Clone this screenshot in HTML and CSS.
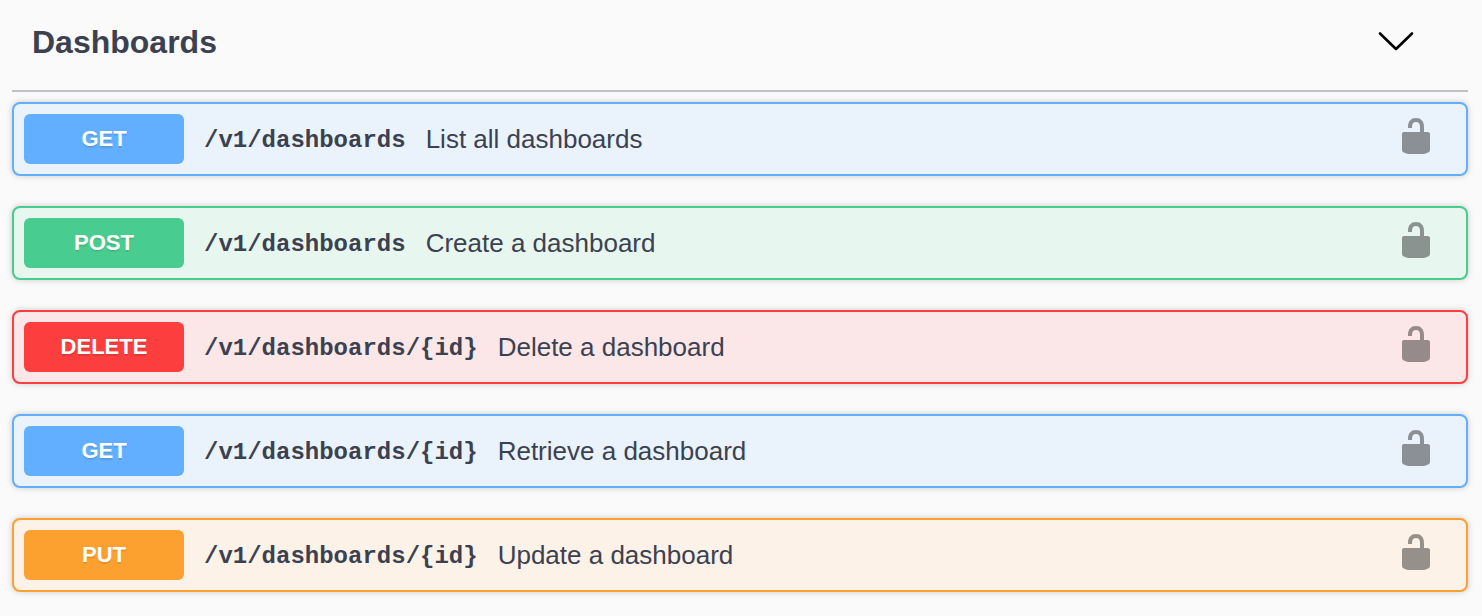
FILE: index.html
```html
<!DOCTYPE html>
<html lang="en">
<head>
<meta charset="utf-8">
<title>Dashboards</title>
<link rel="stylesheet" href="styles.css">
</head>
<body>
<svg width="0" height="0" hidden>
  <symbol id="unlocked" viewBox="0 0 20 20"><path d="M15.800 8H14V5.600C14 2.703 12.665 1 10 1 7.334 1 6 2.703 6 5.600V6h2v-.801C8 3.754 8.797 3 10 3c1.203 0 2 .754 2 2.199V8H4c-.553 0-1 .346-1 .9V17c0 .549.428 1.139.951 1.307l1.197.387C5.672 18.861 6.550 19 7.100 19h5.800c.549 0 1.428-.139 1.951-.307l1.196-.387c.524-.167.953-.757.953-1.306V8.900C17 8.346 16.352 8 15.800 8z"/></symbol>
</svg>
<main class="tag-section">
  <header class="tag-header">
    <h2 class="tag-title">Dashboards</h2>
    <button class="icon-button" type="button" aria-label="Collapse section" aria-expanded="true">
      <svg class="chevron" viewBox="0 0 40 40"><path d="M4 11.500 20 27 36 11.500" fill="none" stroke="#000" stroke-width="2.600" stroke-linecap="round" stroke-linejoin="round"/></svg>
    </button>
  </header>
  <div class="operations">
    <section class="operation get">
      <button class="summary" type="button"><span class="method">GET</span><span class="path">/v1/dashboards</span><span class="description">List all dashboards</span></button>
      <button class="authorize" type="button" aria-label="Authorize"><svg class="lock"><use href="#unlocked"/></svg></button>
    </section>
    <section class="operation post">
      <button class="summary" type="button"><span class="method">POST</span><span class="path">/v1/dashboards</span><span class="description">Create a dashboard</span></button>
      <button class="authorize" type="button" aria-label="Authorize"><svg class="lock"><use href="#unlocked"/></svg></button>
    </section>
    <section class="operation delete">
      <button class="summary" type="button"><span class="method">DELETE</span><span class="path">/v1/dashboards/{id}</span><span class="description">Delete a dashboard</span></button>
      <button class="authorize" type="button" aria-label="Authorize"><svg class="lock"><use href="#unlocked"/></svg></button>
    </section>
    <section class="operation get">
      <button class="summary" type="button"><span class="method">GET</span><span class="path">/v1/dashboards/{id}</span><span class="description">Retrieve a dashboard</span></button>
      <button class="authorize" type="button" aria-label="Authorize"><svg class="lock"><use href="#unlocked"/></svg></button>
    </section>
    <section class="operation put">
      <button class="summary" type="button"><span class="method">PUT</span><span class="path">/v1/dashboards/{id}</span><span class="description">Update a dashboard</span></button>
      <button class="authorize" type="button" aria-label="Authorize"><svg class="lock"><use href="#unlocked"/></svg></button>
    </section>
  </div>
</main>
</body>
</html>
```

FILE: styles.css
```css
* { box-sizing: border-box; }
body {
  margin: 0;
  background: #fafafa;
  color: #3b4151;
  font-family: "Liberation Sans", Arial, sans-serif;
}
button {
  margin: 0;
  padding: 0;
  border: 0;
  background: none;
  color: inherit;
  font: inherit;
  cursor: pointer;
}
svg { display: block; }
.tag-section { padding: 0 14px 24px 12px; }
.tag-header {
  display: flex;
  align-items: center;
  justify-content: space-between;
  padding: 16px 52px 22px 20px;
  border-bottom: 2px solid #c0c2c6;
}
.tag-title {
  margin: 0;
  font-size: 32px;
  line-height: 52px;
}
.chevron { width: 40px; height: 40px; }
.operations {
  display: flex;
  flex-direction: column;
  gap: 30px;
  padding-top: 10px;
}
.operation {
  display: flex;
  align-items: center;
  padding: 10px 30px 10px 10px;
  border: 2px solid var(--accent);
  border-radius: 8px;
  background: var(--tint);
  box-shadow: 0 0 6px rgba(0, 0, 0, 0.19);
}
.get { --accent: #61affe; --tint: #eaf2fc; }
.post { --accent: #49cc90; --tint: #e8f6f0; }
.delete { --accent: #fc3e3e; --tint: #fbe7e7; }
.put { --accent: #fca130; --tint: #fcf2e7; }
.summary {
  display: flex;
  flex: 1;
  align-items: center;
  text-align: left;
}
.method {
  width: 160px;
  border-radius: 6px;
  background: var(--accent);
  color: #fff;
  font-size: 22px;
  font-weight: 700;
  line-height: 50px;
  text-align: center;
  text-shadow: 0 2px 0 rgba(0, 0, 0, 0.1);
}
.path {
  padding: 2px 20px 0;
  font-family: "Liberation Mono", "Courier New", monospace;
  font-size: 24px;
  font-weight: 700;
}
.description { font-size: 26px; }
.authorize { padding-bottom: 6px; }
.lock {
  width: 40px;
  height: 40px;
  fill: #000;
  opacity: 0.4;
}
```
